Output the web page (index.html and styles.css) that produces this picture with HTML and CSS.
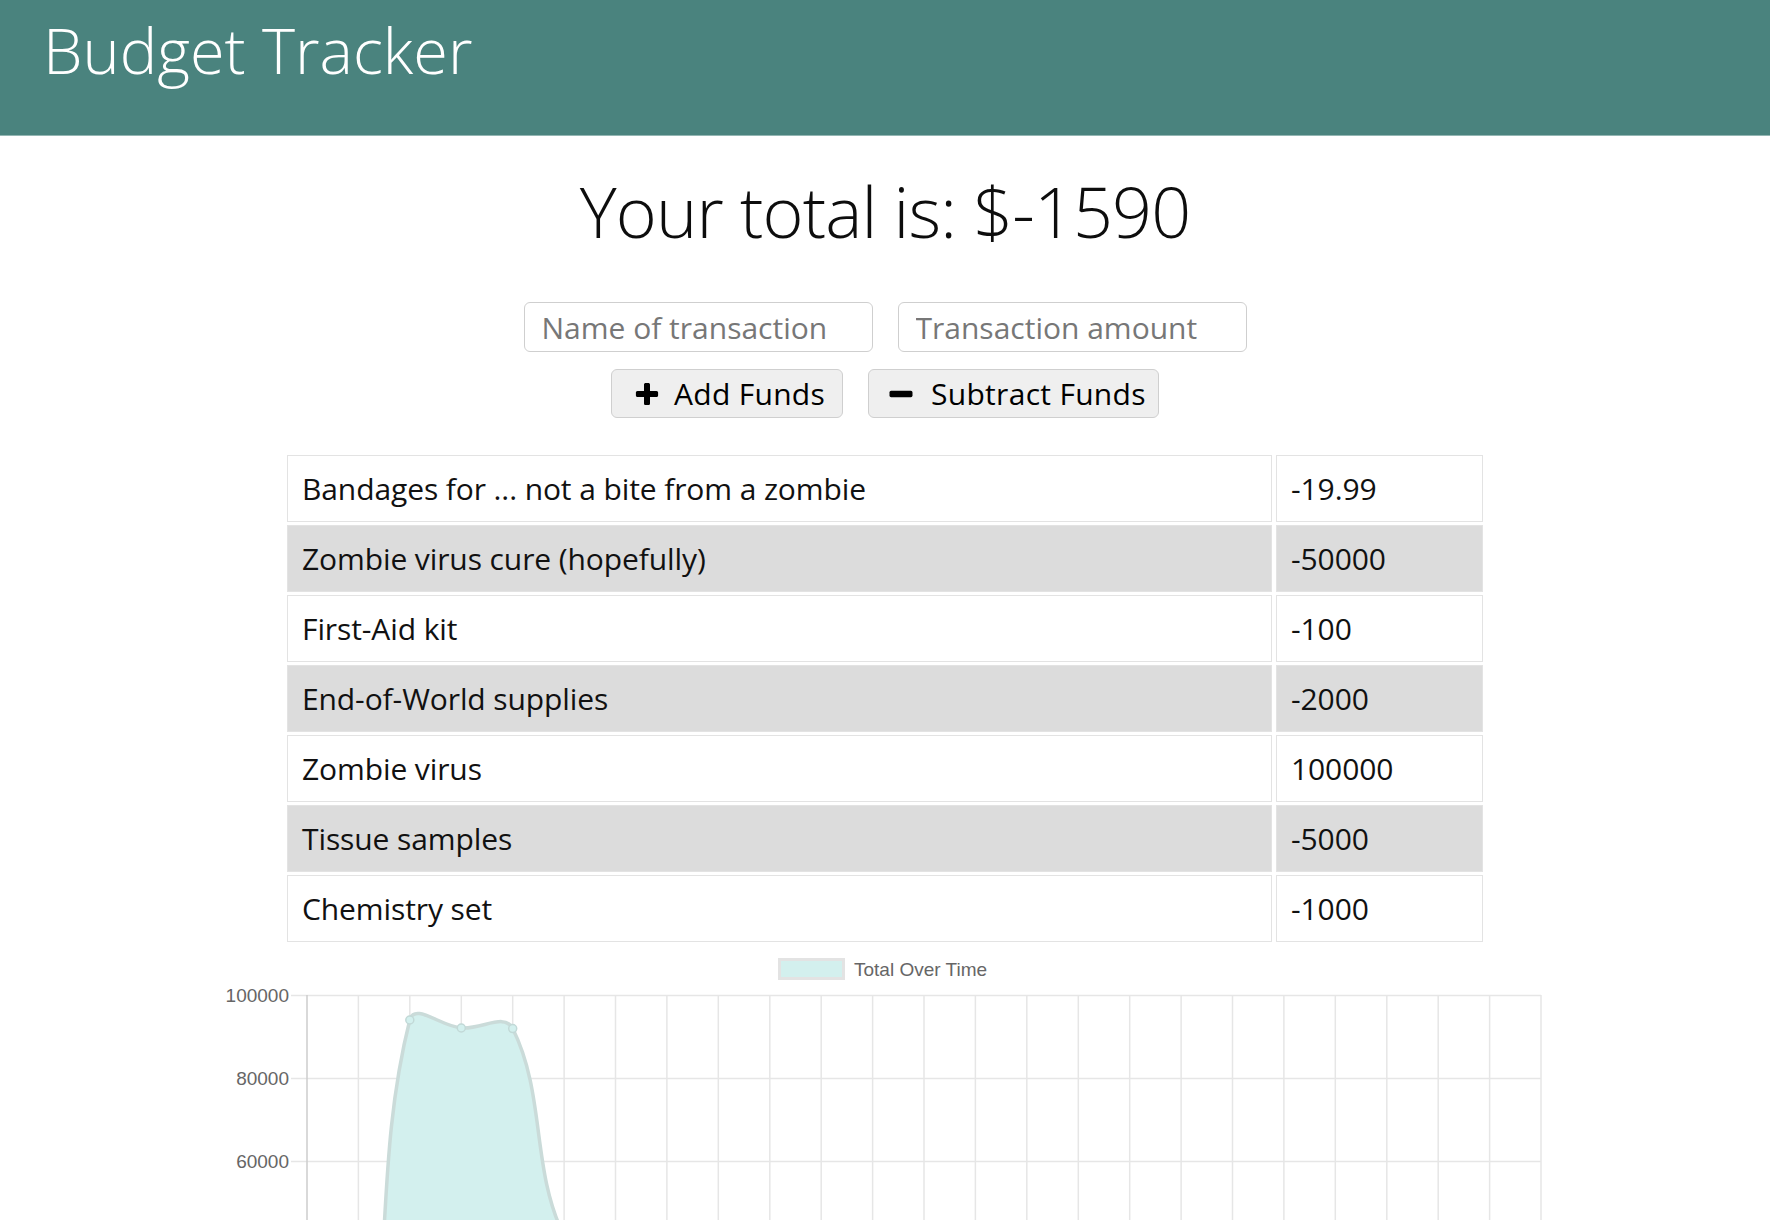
FILE: index.html
```html
<!DOCTYPE html>
<html lang="en">
<head>
<meta charset="utf-8">
<title>Budget Tracker</title>
<link rel="stylesheet" href="styles.css">
</head>
<body>
<header class="header">
  <h1 class="title">Budget Tracker</h1>
</header>
<main class="main">
  <h2 class="total">Your total is: $<span class="total-value">-1590</span></h2>
  <form class="form">
    <div class="inputs">
      <input class="input" type="text" placeholder="Name of transaction">
      <input class="input" type="number" placeholder="Transaction amount">
    </div>
    <div class="buttons">
      <button class="btn btn-add" type="button">
        <svg class="icon" width="24" height="24" viewBox="0 0 24 24"><path d="M9 2.5c0-1 .8-1.6 1.6-1.6h2.8c.8 0 1.6.6 1.6 1.6V9h6.5c1 0 1.6.8 1.6 1.6v2.8c0 .8-.6 1.6-1.6 1.6H15v6.5c0 1-.8 1.6-1.6 1.6h-2.8c-.8 0-1.6-.6-1.6-1.6V15H2.5c-1 0-1.6-.8-1.6-1.6v-2.8C.9 9.8 1.5 9 2.5 9H9z" fill="#000"/></svg>
        <span>Add Funds</span>
      </button>
      <button class="btn btn-sub" type="button">
        <svg class="icon" width="24" height="24" viewBox="0 0 24 24"><rect x="0.5" y="8.8" width="23" height="6.4" rx="1.6" fill="#000"/></svg>
        <span>Subtract Funds</span>
      </button>
    </div>
  </form>
  <table class="table">
    <tbody>
      <tr><td class="name">Bandages for ... not a bite from a zombie</td><td class="amount">-19.99</td></tr>
      <tr class="alt"><td class="name">Zombie virus cure (hopefully)</td><td class="amount">-50000</td></tr>
      <tr><td class="name">First-Aid kit</td><td class="amount">-100</td></tr>
      <tr class="alt"><td class="name">End-of-World supplies</td><td class="amount">-2000</td></tr>
      <tr><td class="name">Zombie virus</td><td class="amount">100000</td></tr>
      <tr class="alt"><td class="name">Tissue samples</td><td class="amount">-5000</td></tr>
      <tr><td class="name">Chemistry set</td><td class="amount">-1000</td></tr>
    </tbody>
  </table>
  <div class="chart">
    <svg class="chart-svg" width="1328" height="280" viewBox="221 945 1328 280">
      <g class="grid">
        <line x1="291" y1="995.5" x2="1541" y2="995.5"/>
        <line x1="291" y1="1078.5" x2="1541" y2="1078.5"/>
        <line x1="291" y1="1161.5" x2="1541" y2="1161.5"/>
        <line x1="358.4" y1="995" x2="358.4" y2="1226"/>
        <line x1="409.8" y1="995" x2="409.8" y2="1226"/>
        <line x1="461.3" y1="995" x2="461.3" y2="1226"/>
        <line x1="512.7" y1="995" x2="512.7" y2="1226"/>
        <line x1="564.1" y1="995" x2="564.1" y2="1226"/>
        <line x1="615.5" y1="995" x2="615.5" y2="1226"/>
        <line x1="666.9" y1="995" x2="666.9" y2="1226"/>
        <line x1="718.3" y1="995" x2="718.3" y2="1226"/>
        <line x1="769.8" y1="995" x2="769.8" y2="1226"/>
        <line x1="821.2" y1="995" x2="821.2" y2="1226"/>
        <line x1="872.6" y1="995" x2="872.6" y2="1226"/>
        <line x1="924" y1="995" x2="924" y2="1226"/>
        <line x1="975.4" y1="995" x2="975.4" y2="1226"/>
        <line x1="1026.8" y1="995" x2="1026.8" y2="1226"/>
        <line x1="1078.3" y1="995" x2="1078.3" y2="1226"/>
        <line x1="1129.7" y1="995" x2="1129.7" y2="1226"/>
        <line x1="1181.1" y1="995" x2="1181.1" y2="1226"/>
        <line x1="1232.5" y1="995" x2="1232.5" y2="1226"/>
        <line x1="1283.9" y1="995" x2="1283.9" y2="1226"/>
        <line x1="1335.3" y1="995" x2="1335.3" y2="1226"/>
        <line x1="1386.8" y1="995" x2="1386.8" y2="1226"/>
        <line x1="1438.2" y1="995" x2="1438.2" y2="1226"/>
        <line x1="1489.6" y1="995" x2="1489.6" y2="1226"/>
        <line x1="1541" y1="995" x2="1541" y2="1226"/>
      </g>
      <line class="axis" x1="307" y1="995" x2="307" y2="1226"/>
      <g class="ylabels">
        <text x="289" y="1001.5">100000</text>
        <text x="289" y="1084.5">80000</text>
        <text x="289" y="1167.5">60000</text>
      </g>
      <path class="area" d="M358.4 1435 C394.8 1295.9 373.2 1164.8 409.8 1020 C414.4 1002 440.6 1026.3 461.3 1028 C481.8 1029.7 504.7 1012.4 512.7 1028.6 C545.9 1095.6 531 1169.1 564.1 1236 L564.1 1440 L358.4 1440 Z"/>
      <path class="curve" d="M358.4 1435 C394.8 1295.9 373.2 1164.8 409.8 1020 C414.4 1002 440.6 1026.3 461.3 1028 C481.8 1029.7 504.7 1012.4 512.7 1028.6 C545.9 1095.6 531 1169.1 564.1 1236"/>
      <g class="points">
        <circle cx="409.8" cy="1020" r="4"/>
        <circle cx="461.3" cy="1028" r="4"/>
        <circle cx="512.7" cy="1028.6" r="4"/>
      </g>
      <rect class="legend-box" x="779.5" y="959.5" width="64" height="19"/>
      <text class="legend-text" x="854" y="976">Total Over Time</text>
    </svg>
  </div>
</main>
</body>
</html>
```

FILE: styles.css
```css
html, body {
  margin: 0;
  padding: 0;
  background: #ffffff;
}

body {
  font-family: "Open Sans", "DejaVu Sans", sans-serif;
  color: #111111;
}

.header {
  box-sizing: border-box;
  height: 136px;
  padding: 18px 0 0 43px;
  background: #4a837e;
  border-bottom: 1px solid #93b6b3;
}

.title {
  margin: 0;
  font-size: 63px;
  font-weight: 300;
  line-height: 1;
  color: #ffffff;
}

.total {
  margin: 40px 0 0;
  text-align: center;
  font-size: 70px;
  font-weight: 300;
  line-height: 1;
  letter-spacing: -0.9px;
  color: #0d0d0d;
}

.form {
  margin: 56px 0 0;
}

.inputs {
  display: flex;
  justify-content: center;
  gap: 25px;
}

.input {
  box-sizing: border-box;
  width: 349px;
  height: 50px;
  margin: 0;
  padding: 0 17px;
  border: 1px solid #cfcfcf;
  border-radius: 6px;
  font-family: inherit;
  font-size: 30px;
  font-weight: 400;
  color: #111;
  background: #fff;
  outline: none;
}

.input::placeholder {
  color: #777777;
}

.input::-webkit-outer-spin-button,
.input::-webkit-inner-spin-button {
  -webkit-appearance: none;
  margin: 0;
}

.buttons {
  display: flex;
  justify-content: center;
  gap: 25px;
  margin-top: 17px;
}

.btn {
  box-sizing: border-box;
  display: flex;
  align-items: center;
  gap: 18px;
  height: 49px;
  margin: 0;
  padding: 0 0 0 23px;
  border: 1px solid #cfcfcf;
  border-radius: 6px;
  background: #efefef;
  font-family: inherit;
  font-size: 30px;
  font-weight: 400;
  letter-spacing: 0.3px;
  color: #000;
  white-space: nowrap;
  cursor: pointer;
}

.btn-add {
  width: 232px;
  gap: 15px;
}

.btn-sub {
  width: 291px;
  padding-left: 20px;
}

.icon {
  display: block;
  flex: none;
}

.table {
  width: 1204px;
  margin: 34px auto 0;
  border-collapse: separate;
  border-spacing: 4px 3px;
  table-layout: fixed;
}

.table td {
  padding: 0 14px;
  border: 1px solid #e3e3e3;
  line-height: 65px;
  font-size: 30px;
  font-weight: 400;
  letter-spacing: -0.1px;
  color: #111;
  white-space: nowrap;
}

.table td.name {
  width: 955px;
}

.table td.amount {
  width: 177px;
}

.table tr.alt td {
  background: #dcdcdc;
}

.chart {
  width: 1328px;
  margin: 0 auto;
}

.chart-svg {
  display: block;
}

.grid line {
  stroke: #e6e6e6;
  stroke-width: 1.5;
}

.axis {
  stroke: #cccccc;
  stroke-width: 1.5;
}

.ylabels text {
  font-family: "Liberation Sans", Arial, sans-serif;
  font-size: 19px;
  fill: #666666;
  text-anchor: end;
}

.area {
  fill: #d3f0ee;
}

.curve {
  fill: none;
  stroke: #cadbd9;
  stroke-width: 3.5;
}

.points circle {
  fill: #d3f0ee;
  stroke: #c2d9d7;
  stroke-width: 1.5;
}

.legend-box {
  fill: #d3f0ee;
  stroke: #e3e3e3;
  stroke-width: 3;
}

.legend-text {
  font-family: "Liberation Sans", Arial, sans-serif;
  font-size: 19px;
  fill: #666666;
}
```
